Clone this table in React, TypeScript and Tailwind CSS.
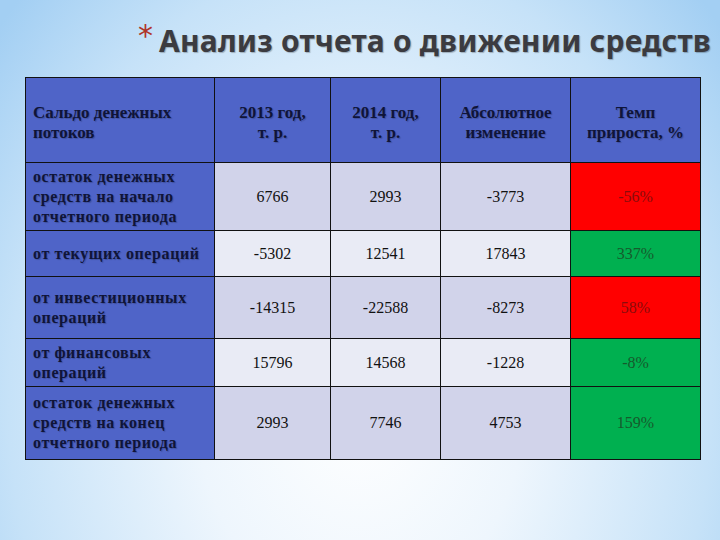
import React from "react";

type Row = { label: string[]; a: string; b: string; c: string; d: string; good: boolean; dark: boolean; h: string };

const rows: Row[] = [
  { label: ["остаток денежных", "средств на начало", "отчетного периода"], a: "6766", b: "2993", c: "-3773", d: "-56%", good: false, dark: true, h: "h-[68px]" },
  { label: ["от текущих операций"], a: "-5302", b: "12541", c: "17843", d: "337%", good: true, dark: false, h: "h-[46px]" },
  { label: ["от инвестиционных", "операций"], a: "-14315", b: "-22588", c: "-8273", d: "58%", good: false, dark: true, h: "h-[62px]" },
  { label: ["от финансовых", "операций"], a: "15796", b: "14568", c: "-1228", d: "-8%", good: true, dark: false, h: "h-[48px]" },
  { label: ["остаток денежных", "средств на конец", "отчетного периода"], a: "2993", b: "7746", c: "4753", d: "159%", good: true, dark: true, h: "h-[72px]" },
];

const serif = { fontFamily: '"Liberation Serif", "Times New Roman", serif' };

export default function App() {
  return (
    <div className="w-[720px] h-[540px] overflow-hidden bg-[radial-gradient(ellipse_65%_110%_at_50%_75%,#ffffff_0%,#eef6fd_35%,#c6e2f8_75%,#a3cff3_100%)]">
      <div className="flex items-start h-[77px] pl-[138px] pt-[23px]">
        <span className="text-[#b0342a] text-[30px] leading-[26px] mr-[6px]" style={{ fontFamily: '"DejaVu Sans", sans-serif' }}>*</span>
        <span
          className="text-[#3b3b40] text-[30px] leading-[36px] font-bold tracking-[0.2px] [text-shadow:1px_1px_1px_rgba(0,0,0,0.25)]"
          style={{ fontFamily: '"Noto Sans", "DejaVu Sans", sans-serif' }}
        >
          Анализ отчета о движении средств
        </span>
      </div>
      <div className="ml-[25px] w-[676px] border border-[#111] grid grid-cols-[189px_116px_110px_130px_129px]" style={serif}>
        <div className="h-[85px] bg-[#4f64c8] border-r border-b border-[#111] flex items-center pl-[7px] pt-[5px] text-[#0f1438] font-bold text-[17px] leading-[20px] [text-shadow:1px_1px_1px_rgba(0,0,0,0.2)]">
          <div>Сальдо денежных<br />потоков</div>
        </div>
        {["2013 год,|т. р.", "2014 год,|т. р.", "Абсолютное|изменение", "Темп|прироста, %"].map((t, i) => (
          <div
            key={i}
            className={`h-[85px] bg-[#4f64c8] border-b border-[#111] flex items-center justify-center pt-[5px] text-center text-[#0f1438] font-bold text-[17px] leading-[20px] [text-shadow:1px_1px_1px_rgba(0,0,0,0.2)] ${i < 3 ? "border-r" : ""}`}
          >
            <div>
              {t.split("|")[0]}
              <br />
              {t.split("|")[1]}
            </div>
          </div>
        ))}
        {rows.map((r, ri) => {
          const bg = r.dark ? "bg-[#d1d3ea]" : "bg-[#e9ebf5]";
          const bb = ri < rows.length - 1 ? "border-b" : "";
          return (
            <React.Fragment key={ri}>
              <div className={`${r.h} bg-[#4f64c8] border-r ${bb} border-[#111] flex items-center pl-[7px] text-[#0f1438] font-bold text-[16px] leading-[20px] tracking-[0.6px] [text-shadow:1px_1px_1px_rgba(0,0,0,0.2)]`}>
                <div>
                  {r.label.map((l, k) => (
                    <div key={k}>{l}</div>
                  ))}
                </div>
              </div>
              {[r.a, r.b, r.c].map((v, k) => (
                <div key={k} className={`${r.h} ${bg} border-r ${bb} border-[#111] flex items-center justify-center text-[#111] text-[16px]`}>
                  {v}
                </div>
              ))}
              <div className={`${r.h} ${r.good ? "bg-[#00b050] text-[#165a2c]" : "bg-[#ff0000] text-[#8a0c0c]"} ${bb} border-[#111] flex items-center justify-center text-[16px]`}>
                {r.d}
              </div>
            </React.Fragment>
          );
        })}
      </div>
    </div>
  );
}
